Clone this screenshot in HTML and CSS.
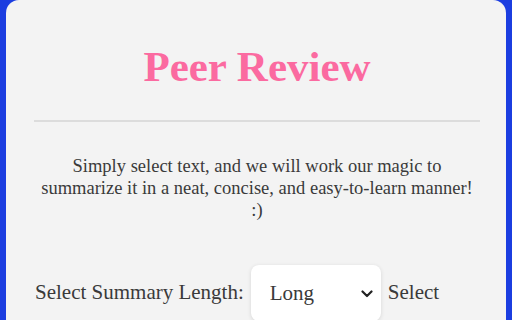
FILE: index.html
```html
<!DOCTYPE html>
<html lang="en">
<head>
<meta charset="utf-8">
<title>Peer Review</title>
<link rel="stylesheet" href="styles.css">
</head>
<body>
<main class="card">
  <h1 class="title">Peer Review</h1>
  <div class="divider"></div>
  <p class="intro">Simply select text, and we will work our magic to summarize it in a neat, concise, and easy-to-learn manner! :)</p>
  <div class="row">
    <label class="label" for="len">Select Summary Length:</label>
    <div class="select-wrap">
      <select id="len" class="select">
        <option>Short</option>
        <option>Medium</option>
        <option selected>Long</option>
      </select>
      <svg class="chevron" width="12" height="8" viewBox="0 0 12 8"><path d="M1.5 1.5 L6 6 L10.5 1.5" fill="none" stroke="#222" stroke-width="2.2" stroke-linecap="round" stroke-linejoin="round"/></svg>
    </div>
    <span class="label">Select</span>
  </div>
</main>
</body>
</html>
```
FILE: styles.css
```css
html, body {
  margin: 0;
  padding: 0;
}
body {
  background: #1b3de0;
  height: 320px;
  overflow: hidden;
  padding: 0 6px;
  font-family: "Liberation Serif", "Times New Roman", serif;
}
.card {
  background: #f3f3f3;
  border-radius: 13px;
  min-height: 400px;
  padding: 41px 26px 0 28px;
  box-sizing: border-box;
}
.title {
  margin: 0;
  font-size: 43px;
  line-height: 1.2;
  font-weight: bold;
  color: #fb6aa0;
  text-align: center;
}
.divider {
  margin-top: 27px;
  height: 2px;
  background: #dcdcdc;
}
.intro {
  margin: 33px auto 0;
  max-width: 440px;
  font-size: 18.5px;
  line-height: 22px;
  color: #3a3a3a;
  text-align: center;
}
.row {
  margin-top: 44px;
  display: flex;
  align-items: center;
  gap: 7px;
  padding-left: 1px;
}
.label {
  font-size: 21px;
  color: #3a3a3a;
}
.select-wrap {
  position: relative;
  width: 130px;
  height: 56px;
}
.select {
  appearance: none;
  -webkit-appearance: none;
  width: 100%;
  height: 100%;
  border: none;
  border-radius: 8px;
  background: #ffffff;
  box-shadow: 0 1px 4px rgba(0, 0, 0, 0.12);
  font-family: "Liberation Serif", "Times New Roman", serif;
  font-size: 21px;
  color: #3a3a3a;
  padding: 0 0 0 19px;
  outline: none;
}
.chevron {
  position: absolute;
  right: 8px;
  top: 25px;
  pointer-events: none;
}
```
